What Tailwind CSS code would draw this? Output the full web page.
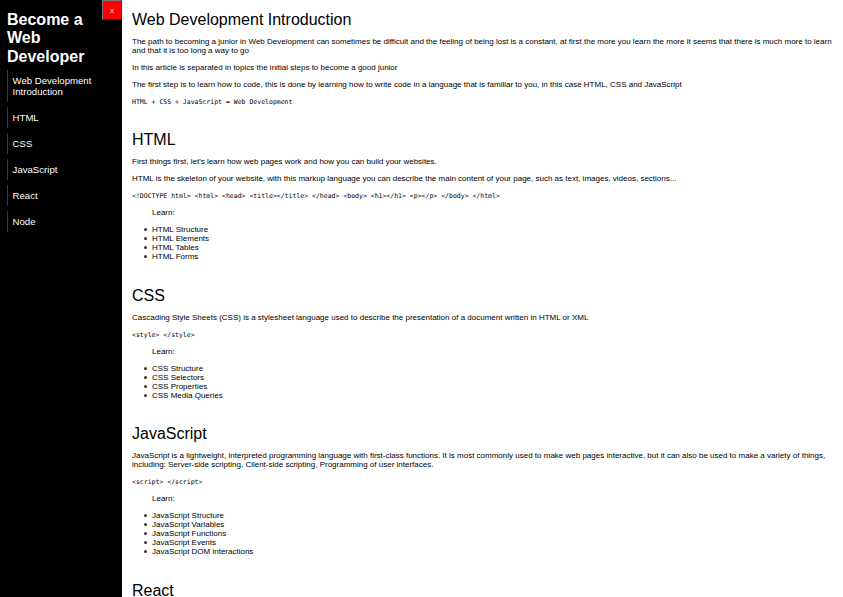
<!DOCTYPE html>
<html lang="en">
<head>
<meta charset="utf-8">
<title>Become a Web Developer</title>
<script src="https://cdn.jsdelivr.net/npm/@tailwindcss/browser@4"></script>
</head>
<body class="flex h-screen overflow-hidden bg-white font-['Liberation_Sans',Arial,sans-serif] text-[8px] leading-[9px] text-black">
<nav class="relative h-full w-[122px] shrink-0 bg-black pl-[7px] pt-[11px] text-white">
  <button class="absolute right-0 top-0 h-5 w-5 border border-[#767676] border-r-[#333] border-b-[#333] bg-[#ff0000] text-[8px] leading-[9px] text-white/90">x</button>
  <h1 class="w-[95px] text-[16px] font-bold leading-[18.4px]">Become a Web Developer</h1>
  <ul class="mt-[3.8px] flex flex-col gap-[5px] text-[9.6px] leading-[11px]">
    <li class="border-l border-[#1b3f66] py-[5px] pl-[4.6px]"><a href="#intro" class="block w-[100px]">Web Development Introduction</a></li>
    <li class="border-l border-[#1b3f66] py-[5px] pl-[4.6px]"><a href="#html">HTML</a></li>
    <li class="border-l border-[#1b3f66] py-[5px] pl-[4.6px]"><a href="#css">CSS</a></li>
    <li class="border-l border-[#1b3f66] py-[5px] pl-[4.6px]"><a href="#js">JavaScript</a></li>
    <li class="border-l border-[#1b3f66] py-[5px] pl-[4.6px]"><a href="#react">React</a></li>
    <li class="border-l border-[#1b3f66] py-[5px] pl-[4.6px]"><a href="#node">Node</a></li>
  </ul>
</nav>
<main class="flex-1 px-[10px] pt-[11px]">
  <section id="intro" class="mb-[25px] flex flex-col gap-2">
    <h2 class="text-[16px] leading-[18px]">Web Development Introduction</h2>
    <p>The path to becoming a junior in Web Development can sometimes be difficult and the feeling of being lost is a constant, at first the more you learn the more it seems that there is much more to learn and that it is too long a way to go</p>
    <p>In this article is separated in topics the initial steps to become a good junior</p>
    <p>The first step is to learn how to code, this is done by learning how to write code in a language that is familiar to you, in this case HTML, CSS and JavaScript</p>
    <code class="block h-[9px] pt-[1px] font-['DejaVu_Sans_Mono',monospace] text-[6.5px]">HTML + CSS + JavaScript = Web Development</code>
  </section>
  <section id="html" class="mb-[26px] flex flex-col gap-2">
    <h2 class="text-[16px] leading-[18px]">HTML</h2>
    <p>First things first, let's learn how web pages work and how you can build your websites.</p>
    <p>HTML is the skeleton of your website, with this markup language you can describe the main content of your page, such as text, images, videos, sections...</p>
    <code class="block h-[9px] pt-[1px] font-['DejaVu_Sans_Mono',monospace] text-[6.5px]">&lt;!DOCTYPE html&gt; &lt;html&gt; &lt;head&gt; &lt;title&gt;&lt;/title&gt; &lt;/head&gt; &lt;body&gt; &lt;h1&gt;&lt;/h1&gt; &lt;p&gt;&lt;/p&gt; &lt;/body&gt; &lt;/html&gt;</code>
    <p class="pl-5">Learn:</p>
    <ul class="pl-5 *:relative *:before:absolute *:before:left-[-8px] *:before:top-[3px] *:before:size-[3px] *:before:rounded-full *:before:bg-black/80 *:before:content-['']"><li>HTML Structure</li><li>HTML Elements</li><li>HTML Tables</li><li>HTML Forms</li></ul>
  </section>
  <section id="css" class="mb-[25px] flex flex-col gap-2">
    <h2 class="text-[16px] leading-[18px]">CSS</h2>
    <p>Cascading Style Sheets (CSS) is a stylesheet language used to describe the presentation of a document written in HTML or XML</p>
    <code class="block h-[9px] pt-[1px] font-['DejaVu_Sans_Mono',monospace] text-[6.5px]">&lt;style&gt; &lt;/style&gt;</code>
    <p class="pl-5">Learn:</p>
    <ul class="pl-5 *:relative *:before:absolute *:before:left-[-8px] *:before:top-[3px] *:before:size-[3px] *:before:rounded-full *:before:bg-black/80 *:before:content-['']"><li>CSS Structure</li><li>CSS Selectors</li><li>CSS Properties</li><li>CSS Media Queries</li></ul>
  </section>
  <section id="js" class="mb-[26px] flex flex-col gap-2">
    <h2 class="text-[16px] leading-[18px]">JavaScript</h2>
    <p>JavaScript is a lightweight, interpreted programming language with first-class functions. It is most commonly used to make web pages interactive, but it can also be used to make a variety of things, including: Server-side scripting, Client-side scripting, Programming of user interfaces.</p>
    <code class="block h-[9px] pt-[1px] font-['DejaVu_Sans_Mono',monospace] text-[6.5px]">&lt;script&gt; &lt;/script&gt;</code>
    <p class="pl-5">Learn:</p>
    <ul class="pl-5 *:relative *:before:absolute *:before:left-[-8px] *:before:top-[3px] *:before:size-[3px] *:before:rounded-full *:before:bg-black/80 *:before:content-['']"><li>JavaScript Structure</li><li>JavaScript Variables</li><li>JavaScript Functions</li><li>JavaScript Events</li><li>JavaScript DOM interactions</li></ul>
  </section>
  <section id="react">
    <h2 class="text-[16px] leading-[18px]">React</h2>
  </section>
</main>
</body>
</html>
